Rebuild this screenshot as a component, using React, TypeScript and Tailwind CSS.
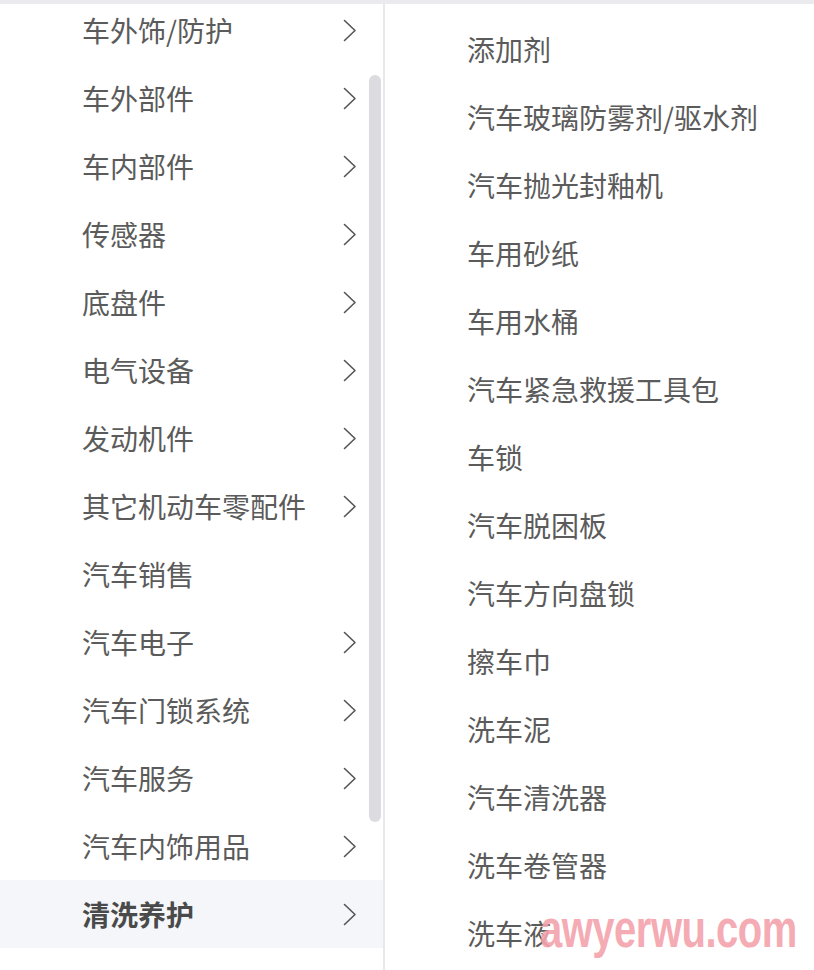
const leftItems: { name: string; arrow: boolean }[] = [
  { name: "车外饰/防护", arrow: true },
  { name: "车外部件", arrow: true },
  { name: "车内部件", arrow: true },
  { name: "传感器", arrow: true },
  { name: "底盘件", arrow: true },
  { name: "电气设备", arrow: true },
  { name: "发动机件", arrow: true },
  { name: "其它机动车零配件", arrow: true },
  { name: "汽车销售", arrow: false },
  { name: "汽车电子", arrow: true },
  { name: "汽车门锁系统", arrow: true },
  { name: "汽车服务", arrow: true },
  { name: "汽车内饰用品", arrow: true },
  { name: "清洗养护", arrow: true },
];

const rightItems = [
  "添加剂",
  "汽车玻璃防雾剂/驱水剂",
  "汽车抛光封釉机",
  "车用砂纸",
  "车用水桶",
  "汽车紧急救援工具包",
  "车锁",
  "汽车脱困板",
  "汽车方向盘锁",
  "擦车巾",
  "洗车泥",
  "汽车清洗器",
  "洗车卷管器",
  "洗车液",
];

const selected = "清洗养护";

function Chevron() {
  return (
    <svg width="14" height="23" viewBox="0 0 14 23" fill="none" className="shrink-0">
      <polyline
        points="1.5,1.5 12,11.5 1.5,21.5"
        stroke="#555"
        strokeWidth="1.6"
        strokeLinecap="round"
        strokeLinejoin="round"
      />
    </svg>
  );
}

export default function App() {
  return (
    <div
      className="relative w-[814px] h-[970px] overflow-hidden bg-white text-[28px] text-[#5b5b5b]"
      style={{ fontFamily: '"Noto Sans CJK SC", "Noto Sans", sans-serif' }}
    >
      <div className="relative z-10 h-[4px] bg-[#ebebef]" />
      <div className="flex h-[966px]">
        {/* category column */}
        <div className="relative w-[385px] shrink-0 overflow-hidden border-r-2 border-[#e8e8ea]">
          <div className="-mt-[8px]">
            {leftItems.map((item) => {
              const active = item.name === selected;
              return (
                <div
                  key={item.name}
                  className={
                    active
                      ? "flex h-[68px] items-center bg-[#f5f6f9] pl-[82px] pr-[26px] font-bold text-[#4a4a4a]"
                      : "flex h-[68px] items-center pl-[82px] pr-[26px]"
                  }
                >
                  <span className="flex-1 leading-none">{item.name}</span>
                  {item.arrow && <Chevron />}
                </div>
              );
            })}
          </div>
          {/* scrollbar */}
          <div className="absolute left-[369px] top-[71px] h-[747px] w-[12px] rounded-full bg-[#dcdce0]" />
        </div>

        {/* sub-category column */}
        <div className="flex-1 pt-[11px]">
          {rightItems.map((name) => (
            <div key={name} className="flex h-[68px] items-center pl-[82px] leading-none">
              {name}
            </div>
          ))}
        </div>
      </div>

      {/* watermark */}
      <div
        className="absolute left-[540px] top-[915px] origin-bottom scale-y-[1.3] text-[40px] font-bold leading-none tracking-[-0.5px] text-[#f5a3ab] opacity-90"
        style={{ fontFamily: '"Liberation Sans", sans-serif' }}
      >
        awyerwu.com
      </div>
    </div>
  );
}
